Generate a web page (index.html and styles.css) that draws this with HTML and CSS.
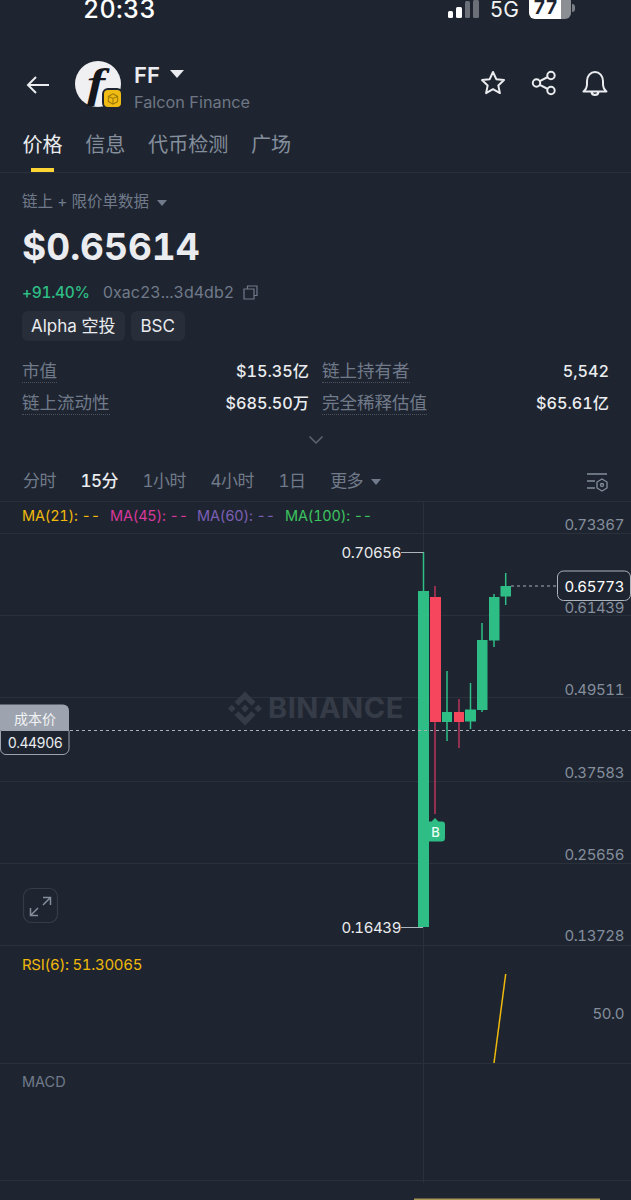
FILE: index.html
```html
<!DOCTYPE html>
<html lang="zh">
<head>
<meta charset="utf-8">
<title>FF</title>
<link rel="stylesheet" href="styles.css">
</head>
<body>
<div class="page">
  <div class="status">
    <span class="time">20:33</span>
    <div class="status-right">
      <div class="signal"><i class="b1"></i><i class="b2"></i><i class="b3"></i><i class="b4"></i></div>
      <span class="net">5G</span>
      <div class="battery"><span class="batt-num">77</span></div>
      <i class="batt-tip"></i>
    </div>
  </div>

  <div class="nav">
    <svg class="back" width="24" height="20" viewBox="0 0 24 20"><path d="M23 10H2M10 2l-8 8 8 8" fill="none" stroke="#eaecef" stroke-width="2"/></svg>
    <div class="logo">
      <span class="logo-f">f</span>
      <div class="badge"><svg width="12" height="12" viewBox="0 0 12 12"><path d="M6 .8l4.600 2.600v5.200L6 11.200 1.400 8.600V3.400zM1.400 3.400L6 5.400l4.600-2M6 5.400v5.800" fill="none" stroke="#a07c05" stroke-width="1.100"/></svg></div>
    </div>
    <div class="title">
      <div class="name">FF <i class="caret big"></i></div>
      <div class="full">Falcon Finance</div>
    </div>
    <div class="actions">
      <svg width="28" height="28" viewBox="0 0 28 28"><path d="M14 3l3.300 7.200 7.700.9-5.700 5.300 1.600 7.700L14 20.200l-6.900 3.900 1.600-7.700L3 11.100l7.700-.9z" fill="none" stroke="#eaecef" stroke-width="2" stroke-linejoin="round"/></svg>
      <svg width="28" height="28" viewBox="0 0 28 28"><g fill="none" stroke="#eaecef" stroke-width="2"><circle cx="21" cy="6.500" r="3.700"/><circle cx="21" cy="21.500" r="3.700"/><circle cx="6.500" cy="14" r="3.700"/><path d="M9.800 12.200l8-4.200M9.800 15.800l8 4.200"/></g></svg>
      <svg width="28" height="28" viewBox="0 0 28 28"><path d="M2.500 22.500c2.500-2 3.500-4 3.500-7.500v-3c0-5 3.500-9 8-9s8 4 8 9v3c0 3.500 1 5.500 3.500 7.500zM10.500 23c.3 2 1.800 3 3.500 3s3.200-1 3.500-3" fill="none" stroke="#eaecef" stroke-width="2" stroke-linejoin="round"/></svg>
    </div>
  </div>

  <div class="tabs">
    <span class="tab active">价格</span>
    <span class="tab">信息</span>
    <span class="tab">代币检测</span>
    <span class="tab">广场</span>
  </div>

  <div class="summary">
    <div class="source">链上 + 限价单数据 <i class="caret small"></i></div>
    <div class="price">$0.65614</div>
    <div class="change-row">
      <span class="change">+91.40%</span>
      <span class="addr">0xac23...3d4db2</span>
      <svg width="15" height="15" viewBox="0 0 15 15"><path d="M4.500 3.500V1h9.500v9.500h-3M1 4h10v10H1z" fill="none" stroke="#707a8a" stroke-width="1.200"/></svg>
    </div>
    <div class="chips"><span class="chip">Alpha 空投</span><span class="chip">BSC</span></div>
    <div class="stats">
      <div class="stat"><span class="label">市值</span><span class="value">$15.35亿</span></div>
      <div class="stat"><span class="label">链上持有者</span><span class="value">5,542</span></div>
      <div class="stat"><span class="label">链上流动性</span><span class="value">$685.50万</span></div>
      <div class="stat"><span class="label">完全稀释估值</span><span class="value">$65.61亿</span></div>
    </div>
    <div class="more"><svg width="16" height="10" viewBox="0 0 16 10"><path d="M1.500 1.500L8 8l6.500-6.500" fill="none" stroke="#5e6673" stroke-width="1.500"/></svg></div>
  </div>

  <div class="intervals">
    <span class="iv">分时</span>
    <span class="iv on">15分</span>
    <span class="iv">1小时</span>
    <span class="iv">4小时</span>
    <span class="iv">1日</span>
    <span class="iv">更多 <i class="caret small"></i></span>
    <svg class="iv-set" width="22" height="22" viewBox="0 0 22 22"><g fill="none" stroke="#848e9c" stroke-width="1.300"><path d="M1 2h20M1 9h8M1 16h8"/><path d="M16 7l5 3v6l-5 3-5-3v-6z"/><circle cx="16" cy="13" r="1.500"/></g></svg>
  </div>

  <svg class="chart" width="631" height="699" viewBox="0 501 631 699">
    <g class="grid">
      <path d="M0 501.500H631M0 533.500H631M0 615.500H631M0 697.500H631M0 781.500H631M0 863.500H631M0 945.500H631M0 1063.500H631M0 1180.500H631M423.500 501V1183"/>
    </g>

    <g class="wm">
      <path transform="translate(228 691.500) scale(.2686)" d="M38.730 53.200l24.590-24.580 24.600 24.600 14.300-14.310L63.320 0 24.420 38.900zM0 63.310l14.300-14.310 14.310 14.310-14.310 14.300zM38.730 73.410L63.320 97.990l24.600-24.600 14.310 14.290-38.900 38.910-38.910-38.880-.02-.02zM98.010 63.310l14.300-14.310 14.300 14.310-14.300 14.300zM77.830 63.300L63.320 48.780 52.590 59.510l-1.240 1.230-2.540 2.540 14.510 14.500 14.510-14.470z"/>
      <text x="268" y="718" class="wm-text">BINANCE</text>
    </g>

    <text class="ma" y="521"><tspan x="22" class="c-y">MA(21): --</tspan><tspan x="110" class="c-p">MA(45): --</tspan><tspan x="197" class="c-v">MA(60): --</tspan><tspan x="285" class="c-g">MA(100): --</tspan></text>

    <g class="axis">
      <text x="624" y="530">0.73367</text>
      <text x="624" y="613">0.61439</text>
      <text x="624" y="695">0.49511</text>
      <text x="624" y="778">0.37583</text>
      <text x="624" y="860">0.25656</text>
      <text x="624" y="941">0.13728</text>
      <text x="624" y="1019">50.0</text>
    </g>

    <g class="wick-g">
      <path d="M423.500 552V591M447 671V741M470.500 683V729M482 623V712M494 594V647M505.700 573V605"/>
    </g>
    <g class="wick-r">
      <path d="M435 586V814M459 699V748"/>
    </g>
    <g class="up">
      <rect x="418" y="591" width="11" height="336"/>
      <rect x="442" y="712" width="10" height="10"/>
      <rect x="465" y="709.500" width="11" height="12"/>
      <rect x="477" y="640" width="10.500" height="70"/>
      <rect x="489" y="597" width="10.500" height="43.500"/>
      <rect x="500.500" y="586" width="10.500" height="10.500"/>
    </g>
    <g class="down">
      <rect x="430" y="597" width="11" height="125"/>
      <rect x="454" y="712" width="10" height="10"/>
    </g>

    <path class="marker" d="M435 818l3.500 3.500h3.500a3 3 0 0 1 3 3v13.500a3.500 3.500 0 0 1-3.500 3.500H429V821.500h2.500z"/>
    <text class="marker-t" x="435.500" y="837">B</text>

    <path class="ext" d="M401 552.500H423.500M401 927.500H423"/>
    <text class="ext-t" x="401" y="558">0.70656</text>
    <text class="ext-t" x="401" y="933">0.16439</text>

    <path class="dash" d="M511 586H557"/>
    <rect class="cur-box" x="557.500" y="571" width="73" height="29.500" rx="6"/>
    <text class="cur-t" x="624" y="592">0.65773</text>

    <path class="dash" d="M70 730.500H631"/>
    <path class="cost-top" d="M0 704.500h63a6 6 0 0 1 6 6v19.500H0z"/>
    <path class="cost-bot" d="M0.500 730.500H69v18a6 6 0 0 1-6 6H6a5.500 5.500 0 0 1-5.500-5.500z"/>
    <text class="cost-l" x="35" y="724">成本价</text>
    <text class="cost-v" x="35" y="748">0.44906</text>

    <rect class="expand" x="23.500" y="888.500" width="34" height="34" rx="8"/>
    <path class="expand-i" d="M43 897.500h7.500v7.500M50 898l-7 7M38 915.500h-7.500v-7.500M31 915l7-7"/>

    <text class="rsi" x="22" y="970">RSI(6): 51.30065</text>
    <path class="rsi-l" d="M494 1063L505.700 974"/>
    <text class="macd" x="22" y="1087">MACD</text>

    <rect class="btn-edge" x="414" y="1198.500" width="186" height="1.500"/>
  </svg>
</div>
</body>
</html>
```

FILE: styles.css
```css
* { box-sizing: border-box; }
html, body { margin: 0; padding: 0; background: #1f2530; }
body {
  font-family: Inter, "Noto Sans CJK SC", sans-serif;
  font-variant-numeric: tabular-nums;
  color: #eaecef;
}
.page { width: 631px; height: 1200px; overflow: hidden; background: #1f2530; }

.status { height: 30px; display: flex; padding-left: 83px; position: relative; }
.time { font-size: 25px; font-weight: 500; line-height: 18px; height: 18px; letter-spacing: .3px; color: #fff; }
.status-right { margin-left: auto; display: flex; align-items: flex-start; padding-right: 56px; }
.signal { display: flex; gap: 3px; align-items: flex-end; height: 18px; }
.signal i { width: 5.500px; display: block; border-radius: 1.500px; background: #fff; }
.signal .b1 { height: 7px; }
.signal .b2 { height: 11px; }
.signal .b3 { height: 17px; background: #6b7078; }
.signal .b4 { height: 18px; background: #6b7078; }
.net { font-size: 21px; line-height: 20px; margin-left: 11px; color: #f2f3f5; }
.battery {
  width: 42px; height: 19px; margin-left: 10px; border-radius: 0 0 6px 6px;
  background: linear-gradient(90deg, #fff 0, #fff 76%, #8b8e93 76%);
  text-align: center; padding-right: 9px;
}
.batt-num { font-size: 19px; font-weight: 700; color: #1f2530; line-height: 16px; display: block; }
.batt-tip { width: 3px; height: 8px; margin: 4px 0 0 1px; background: #7b7e84; border-radius: 0 3px 3px 0; display: block; }

.nav { height: 90px; padding: 31px 22px 0 26px; display: flex; align-items: flex-start; }
.back { margin-top: 14px; }
.logo {
  width: 46px; height: 46px; margin-left: 25px; border-radius: 50%;
  background: #f0f0f3; position: relative; text-align: center;
}
.logo-f {
  display: inline-block; font-family: "Liberation Serif", serif; font-style: italic; font-weight: 700;
  font-size: 42px; line-height: 44px; color: #15171c; transform: scaleX(1.300); margin-right: 4px;
}
.badge {
  position: absolute; right: -2px; bottom: -2px; width: 21px; height: 21px;
  background: #f0bc14; border: 2px solid #1f2530; border-radius: 6px;
  display: flex; align-items: center; justify-content: center;
}
.title { margin-left: 13px; margin-top: 2px; }
.name { font-size: 22px; font-weight: 600; line-height: 24px; color: #eaecef; }
.full { font-size: 16.300px; line-height: 20px; margin-top: 5px; color: #6e7785; }
.actions { margin-left: auto; display: flex; gap: 23px; margin-top: 8px; }

.caret { display: inline-block; width: 0; height: 0; border-left: 6px solid transparent; border-right: 6px solid transparent; border-top: 7px solid #848e9c; vertical-align: middle; }
.caret.big { border-left-width: 7px; border-right-width: 7px; border-top: 8px solid #eaecef; margin: 0 0 6px 4px; }
.caret.small { border-left-width: 5.500px; border-right-width: 5.500px; border-top-width: 6px; border-top-color: #707a8a; margin-left: 4px; }

.tabs { height: 53px; padding: 12px 22.500px 0; display: flex; gap: 22.600px; border-bottom: 1px solid #2b313b; }
.tab { font-size: 20.100px; line-height: 26px; color: #848e9c; position: relative; height: 40px; }
.tab.active { color: #eaecef; }
.tab.active::after { content: ""; position: absolute; left: 8px; right: 9px; bottom: 0; height: 4px; background: #fcd535; }

.summary { padding: 20px 22px 0; }
.source { font-size: 15.500px; line-height: 18px; color: #707a8a; }
.price { font-size: 37px; font-weight: 700; line-height: 44px; margin-top: 14px; color: #eaecef; }
.change-row { display: flex; align-items: center; height: 20px; margin-top: 13px; font-size: 15.500px; }
.change { color: #2ebd85; font-weight: 500; letter-spacing: -.3px; }
.addr { color: #707a8a; margin-left: 13px; font-size: 16px; }
.change-row svg { margin-left: 9px; }
.chips { display: flex; gap: 6px; margin-top: 9px; }
.chip { height: 30px; padding: 0 10px 0 9px; font-size: 17px; line-height: 30px; background: #282e39; border-radius: 6px; color: #eaecef; }
.stats { display: grid; grid-template-columns: 287px 287px; column-gap: 13px; row-gap: 8px; margin-top: 18px; }
.stat { display: flex; justify-content: space-between; height: 24px; align-items: flex-start; }
.label { font-size: 17.500px; line-height: 23px; height: 24px; color: #707a8a; border-bottom: 1px dotted #4c535e; }
.value { font-size: 16.200px; line-height: 24px; font-weight: 500; color: #eaecef; }
.more { height: 18px; margin-top: 20px; display: flex; justify-content: center; }

.intervals { height: 48px; padding: 12px 23px 0; display: flex; gap: 24.500px; align-items: flex-start; position: relative; }
.iv { font-size: 17px; line-height: 32px; color: #707a8a; letter-spacing: -.5px; }
.iv.on { color: #eaecef; font-weight: 500; }
.iv-set { position: absolute; right: 23px; top: 19px; }

.chart { display: block; }
.grid path { stroke: #2b313b; stroke-width: 1; fill: none; }
.wm path { fill: #363c47; }
.wm-text { font-family: Inter, sans-serif; font-size: 29px; font-weight: 700; fill: #363c47; letter-spacing: .5px; }
.ma { font-family: Inter, sans-serif; font-size: 14.500px; letter-spacing: -.2px; }
.c-y { fill: #f0b90b; } .c-p { fill: #d6389c; } .c-v { fill: #7b5fb5; } .c-g { fill: #3bc45f; }
.axis text { font-family: Inter, sans-serif; font-size: 15px; letter-spacing: -.4px; fill: #848e9c; text-anchor: end; }
.wick-g path { stroke: #2ebd85; stroke-width: 1.500; fill: none; }
.wick-r path { stroke: #b8365a; stroke-width: 1.500; fill: none; }
.up rect { fill: #2ebd85; }
.down rect { fill: #f6465d; }
.marker { fill: #2ebd85; }
.marker-t { font-family: Inter, sans-serif; font-size: 13px; font-weight: 500; fill: #eafff6; text-anchor: middle; }
.ext { stroke: #aeb4bc; stroke-width: 1; fill: none; }
.ext-t { font-family: Inter, sans-serif; font-size: 15px; letter-spacing: -.4px; fill: #eaecef; text-anchor: end; }
.dash { stroke: #a9afb8; stroke-width: 1; stroke-dasharray: 3 3; fill: none; }
.cur-box { fill: #1f2530; stroke: #aeb4bc; stroke-width: 1; }
.cur-t { font-family: Inter, sans-serif; font-size: 15px; letter-spacing: -.4px; fill: #fff; text-anchor: end; }
.cost-top { fill: #9da4af; }
.cost-bot { fill: #1f2530; stroke: #9da4af; stroke-width: 1; }
.cost-l { font-family: "Noto Sans CJK SC", sans-serif; font-size: 14px; fill: #f2f3f5; text-anchor: middle; }
.cost-v { font-family: Inter, sans-serif; font-size: 14px; letter-spacing: -.5px; fill: #eaecef; text-anchor: middle; }
.expand { fill: none; stroke: #363c47; stroke-width: 1.200; }
.expand-i { fill: none; stroke: #848e9c; stroke-width: 1.500; }
.rsi { font-family: Inter, sans-serif; font-size: 15px; letter-spacing: -.3px; fill: #f0b90b; }
.rsi-l { stroke: #f0b90b; stroke-width: 1.500; fill: none; }
.macd { font-family: Inter, sans-serif; font-size: 14.500px; fill: #707a8a; }
.btn-edge { fill: #a89a55; }
```
